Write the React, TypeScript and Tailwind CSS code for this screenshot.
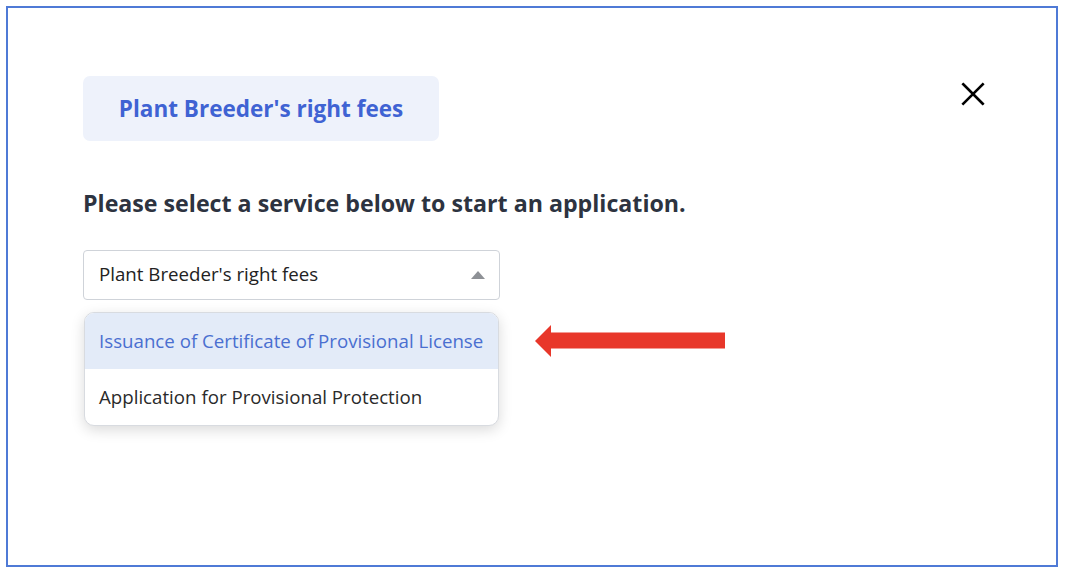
import React from "react";

const options = [
  "Issuance of Certificate of Provisional License",
  "Application for Provisional Protection",
];

const App: React.FC = () => {
  return (
    <div className="w-[1068px] h-[574px] bg-white p-[6px] font-['Open_Sans',sans-serif]">
      <div className="h-[561px] w-[1052px] border-2 border-[#4f7ad6] flex flex-col pl-[75px] pr-[70px] pt-[68px]">
        {/* HEADER */}
        <div className="flex items-start justify-between">
          <div className="h-[65px] w-[356px] rounded-[7px] bg-[#eef2fb] flex items-center justify-center text-[22.5px] font-bold text-[#3f63d3]">
            Plant Breeder's right fees
          </div>
          <button className="mt-[1px] mr-[-4px] p-1">
            <svg width="26" height="26" viewBox="0 0 24 24" fill="none" stroke="#000" strokeWidth="2.4" strokeLinecap="square">
              <path d="M3 3L21 21M21 3L3 21" />
            </svg>
          </button>
        </div>
        {/* BODY */}
        <h2 className="mt-[47px] text-[23.2px] font-bold text-[#2d3340] leading-[30px]">
          Please select a service below to start an application.
        </h2>
        <div className="mt-[32px] flex items-start gap-[35px]">
          <div className="w-[417px] flex flex-col">
            <div className="h-[50px] border border-[#cfd3d9] rounded-[4px] flex items-center justify-between pl-[15px] pr-[14px] text-[18.7px] text-[#222]">
              <span className="-mt-[1px]">Plant Breeder's right fees</span>
              <svg width="14" height="8" viewBox="0 0 14 8">
                <path d="M0 8L7 0L14 8Z" fill="#8e9196" />
              </svg>
            </div>
            <div className="mt-[12px] mx-[1px] rounded-[10px] border border-[#d8dbe0] bg-white shadow-[0_4px_14px_rgba(0,0,0,0.15)] overflow-hidden">
              {options.map((o, i) => (
                <div
                  key={o}
                  className={`h-[56px] flex items-center px-[14px] text-[18.7px] ${
                    i === 0 ? "bg-[#e3ebf8] text-[#4a6fd0]" : "text-[#2a2a2a]"
                  }`}
                >
                  {o}
                </div>
              ))}
            </div>
          </div>
          {/* red pointer */}
          <svg width="192" height="32" viewBox="0 0 192 32" className="mt-[75px]">
            <path d="M0 16L16 0V7.5H190V23.5H16V32Z" fill="#e8372a" />
          </svg>
        </div>
      </div>
    </div>
  );
};

export default App;
